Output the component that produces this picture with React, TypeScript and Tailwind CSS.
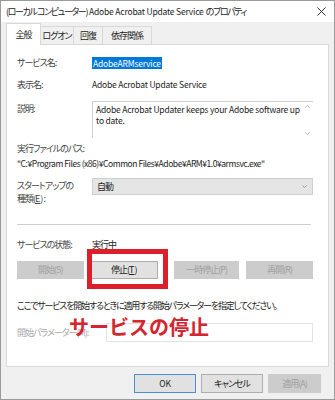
import React from "react";

const F = "font-['Noto_Sans_CJK_JP',sans-serif] [font-feature-settings:'palt']";

function J({ children, t }: { children: React.ReactNode; t?: string }) {
  return <span className={t ?? "tracking-[-1px]"}>{children}</span>;
}
function L({ children, t }: { children: React.ReactNode; t?: string }) {
  return <span className={`text-[8.5px] ${t ?? "tracking-[-0.2px]"}`}>{children}</span>;
}

function Btn({ children, w, disabled, primary }: { children: React.ReactNode; w: string; disabled?: boolean; primary?: boolean }) {
  return (
    <div
      className={`${w} h-full flex items-center justify-center text-[9px] border ${
        disabled
          ? "bg-[#cccccc] border-[#cccccc] text-[#a0a0a0]"
          : primary
          ? "bg-[#e1e1e1] border-[#4a90d9] text-[#222]"
          : "bg-[#e1e1e1] border-[#adadad] text-[#222]"
      }`}
    >
      {children}
    </div>
  );
}

export default function App() {
  return (
    <div className={`${F} relative w-[335px] h-[400px] bg-[#f0f0f0] border border-[#9a9a9a] flex flex-col overflow-hidden text-[#333] text-[9px]`}>
      {/* title bar */}
      <div className="h-[21px] bg-white flex items-center justify-between pl-[5px] pr-[6px] shrink-0">
        <span className="text-[9px] text-[#222] whitespace-nowrap">
          <J t="tracking-[-1.4px]">(ローカル コンピューター)</J> <L>Adobe Acrobat Update Service</L> <J t="tracking-[-1.4px]">のプロパティ</J>
        </span>
        <svg width="9" height="9" viewBox="0 0 9 9" className="mr-[2px]">
          <path d="M0.5 0.5 L8.5 8.5 M8.5 0.5 L0.5 8.5" stroke="#333" strokeWidth="1" />
        </svg>
      </div>
      {/* tabs */}
      <div className="flex items-end h-[22px] px-[5px] shrink-0">
        <div className="h-[22px] w-[35px] bg-white border border-b-0 border-[#d9d9d9] flex items-center justify-center text-[#222] relative top-[1px] z-10"><J>全般</J></div>
        <div className="h-[18px] w-[33px] border-t border-r border-[#d9d9d9] flex items-center justify-center text-[#222]"><J>ログオン</J></div>
        <div className="h-[18px] w-[29px] border-t border-r border-[#d9d9d9] flex items-center justify-center text-[#222]"><J>回復</J></div>
        <div className="h-[18px] w-[49px] border-t border-r border-[#d9d9d9] flex items-center justify-center text-[#222]"><J>依存関係</J></div>
      </div>
      {/* panel */}
      <div className="mx-[5px] h-[323px] bg-white border border-[#d9d9d9] shrink-0 flex flex-col pl-[10px] pr-[15px] pt-[12px]">
        <div className="flex h-[12px] items-center">
          <span className="w-[75px] text-[#444]"><J>サービス名:</J></span>
          <span className="bg-[#0078d7] text-white h-[12px] leading-[12px] px-[1px]"><L>AdobeARMservice</L></span>
        </div>
        <div className="flex h-[12px] items-center mt-[10px]">
          <span className="w-[75px] text-[#444]"><J>表示名:</J></span>
          <span className="text-[#222]"><L>Adobe Acrobat Update Service</L></span>
        </div>
        <div className="flex mt-[10px] h-[37px]">
          <span className="w-[75px] text-[#444] pt-[1px]"><J>説明:</J></span>
          <div className="flex-1 border-t border-l border-[#cfcfcf] flex">
            <div className="flex-1 pl-[3px] pt-[2px] leading-[11px] text-[#222]">
              <L>Adobe Acrobat Updater keeps your Adobe software up to date.</L>
            </div>
            <div className="w-[12px] flex flex-col justify-between items-center py-[3px]">
              <svg width="5" height="3" viewBox="0 0 5 3"><path d="M0.5 2.5 L2.5 0.5 L4.5 2.5" stroke="#b5b5b5" fill="none" /></svg>
              <svg width="5" height="3" viewBox="0 0 5 3"><path d="M0.5 0.5 L2.5 2.5 L4.5 0.5" stroke="#b5b5b5" fill="none" /></svg>
            </div>
          </div>
        </div>
        <div className="h-[12px] flex items-center mt-[5px] text-[#444]"><J>実行ファイルのパス:</J></div>
        <div className="h-[12px] flex items-center mt-[2px] text-[#222] whitespace-nowrap"><L t="tracking-[-0.45px]">"C:¥Program Files (x86)¥Common Files¥Adobe¥ARM¥1.0¥armsvc.exe"</L></div>
        <div className="flex mt-[9px]">
          <div className="w-[75px] text-[#444] leading-[13px] pt-[1px]">
            <div><J>スタートアップの</J></div>
            <div><J>種類(</J><span className="underline">E</span>):</div>
          </div>
          <div className="flex-1 h-[17px] bg-[#e5e5e5] border border-[#d0d0d0] flex items-center justify-between pl-[4px] pr-[5px] text-[#222]">
            <J>自動</J>
            <svg width="5" height="3" viewBox="0 0 5 3"><path d="M0.5 0.5 L2.5 2.5 L4.5 0.5" stroke="#9a9a9a" fill="none" /></svg>
          </div>
        </div>
        <div className="h-px bg-[#cfcfcf] mt-[19px] mr-[2px]" />
        <div className="flex h-[12px] items-center mt-[14px]">
          <span className="w-[75px] text-[#444]"><J>サービスの状態:</J></span>
          <span className="text-[#222]"><J>実行中</J></span>
        </div>
        <div className="flex h-[18px] mt-[10px] gap-[7px]">
          <Btn w="w-[68px]" disabled><J>開始(S)</J></Btn>
          <Btn w="w-[69px]"><J>停止(</J><span className="underline">T</span>)</Btn>
          <div className="w-[2px]" />
          <Btn w="w-[67px]" disabled><J>一時停止(P)</J></Btn>
          <Btn w="w-[68px]" disabled><J>再開(R)</J></Btn>
        </div>
        <div className="h-[12px] flex items-center mt-[21px] text-[#222] whitespace-nowrap"><J t="tracking-[-1.2px]">ここでサービスを開始するときに適用する開始パラメーターを指定してください。</J></div>
        <div className="flex mt-[11px] items-center">
          <span className="w-[89px] text-[#a8a8a8] whitespace-nowrap"><J>開始パラメーター(M):</J></span>
          <div className="flex-1 h-[19px] border border-[#e3e3e3]" />
        </div>
      </div>
      {/* bottom buttons */}
      <div className="flex justify-end h-[19px] mt-[7px] pr-[13px] gap-[5px] shrink-0">
        <Btn w="w-[62px]" primary><L>OK</L></Btn>
        <Btn w="w-[62px]"><J>キャンセル</J></Btn>
        <Btn w="w-[53px]" disabled><J>適用(A)</J></Btn>
      </div>
      {/* annotations */}
      <div className="absolute left-[86px] top-[248px] w-[81px] h-[40px] border-[5px] border-[#dc1f2a]" />
      <div className="absolute left-[68px] top-[314px] text-[20px] font-bold text-[#d22630] leading-[24px] [font-feature-settings:normal] tracking-normal">サービスの停止</div>
    </div>
  );
}
